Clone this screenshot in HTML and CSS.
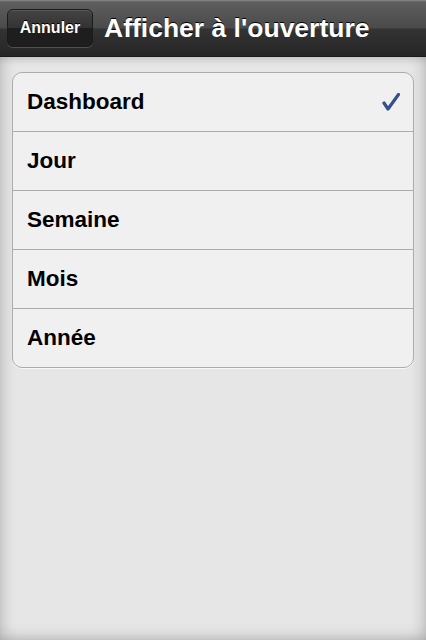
FILE: index.html
```html
<!DOCTYPE html>
<html lang="fr">
<head>
  <meta charset="UTF-8" />
  <meta name="viewport" content="width=device-width, initial-scale=1" />
  <title>Afficher à l'ouverture</title>
  <link rel="stylesheet" href="styles.css">
</head>
<body>
  <header class="navbar">
    <button class="nav-btn" type="button">Annuler</button>
    <h1 class="nav-title">Afficher à l'ouverture</h1>
  </header>

  <main class="content">
    <ul class="table">
      <li class="cell selected">
        <span>Dashboard</span>
        <svg class="check" width="18" height="18" viewBox="0 0 18 18">
          <path d="M2 10 L6 16 L16.5 1.5" fill="none" stroke="#35508a" stroke-width="3.2" stroke-linecap="round" stroke-linejoin="round" />
        </svg>
      </li>
      <li class="cell"><span>Jour</span></li>
      <li class="cell"><span>Semaine</span></li>
      <li class="cell"><span>Mois</span></li>
      <li class="cell"><span>Année</span></li>
    </ul>
  </main>
</body>
</html>
```

FILE: styles.css
```css
html, body {
  margin: 0;
  height: 100%;
}
body {
  font-family: "Liberation Sans", Arial, sans-serif;
  background: #e6e6e6;
  display: flex;
  flex-direction: column;
}
.navbar {
  height: 56px;
  flex: none;
  display: flex;
  align-items: center;
  gap: 11px;
  padding: 0 7px;
  background: linear-gradient(#8c8c8c 0, #5e5e5e 2px, #4a4a4a 28px, #333 29px, #262626 56px);
  border-bottom: 1px solid #1a1a1a;
}
.nav-btn {
  height: 38px;
  width: 86px;
  padding: 0;
  font-family: inherit;
  font-size: 16px;
  font-weight: bold;
  color: #fff;
  border: 1px solid #1b1b1b;
  border-radius: 6px;
  background: linear-gradient(#444 0, #333 50%, #1e1e1e 51%, #1e1e1e 100%);
  box-shadow: 0 1px 0 rgba(255, 255, 255, 0.18), inset 0 1px 0 rgba(255, 255, 255, 0.12);
  text-shadow: 0 -1px 0 #000;
}
.nav-title {
  margin: 0;
  font-size: 26.5px;
  font-weight: bold;
  color: #fff;
  text-shadow: 0 -1px 0 #000;
  white-space: nowrap;
}
.content {
  flex: 1;
  padding: 15px 12px;
  box-shadow: inset 10px 0 14px -6px rgba(0, 0, 0, 0.14),
              inset -10px 0 14px -6px rgba(0, 0, 0, 0.14),
              inset 0 -10px 14px -6px rgba(0, 0, 0, 0.14),
              inset 0 8px 10px -6px rgba(0, 0, 0, 0.12);
}
.table {
  list-style: none;
  margin: 0;
  padding: 0;
  background: #f0f0f0;
  border: 1px solid #acacac;
  border-radius: 10px;
  box-shadow: 0 1px 0 rgba(255, 255, 255, 0.7);
}
.cell {
  height: 58px;
  display: flex;
  align-items: center;
  justify-content: space-between;
  padding: 0 13px 0 14px;
  font-size: 22.5px;
  font-weight: bold;
  color: #000;
}
.cell + .cell {
  border-top: 1px solid #acacac;
}
```
